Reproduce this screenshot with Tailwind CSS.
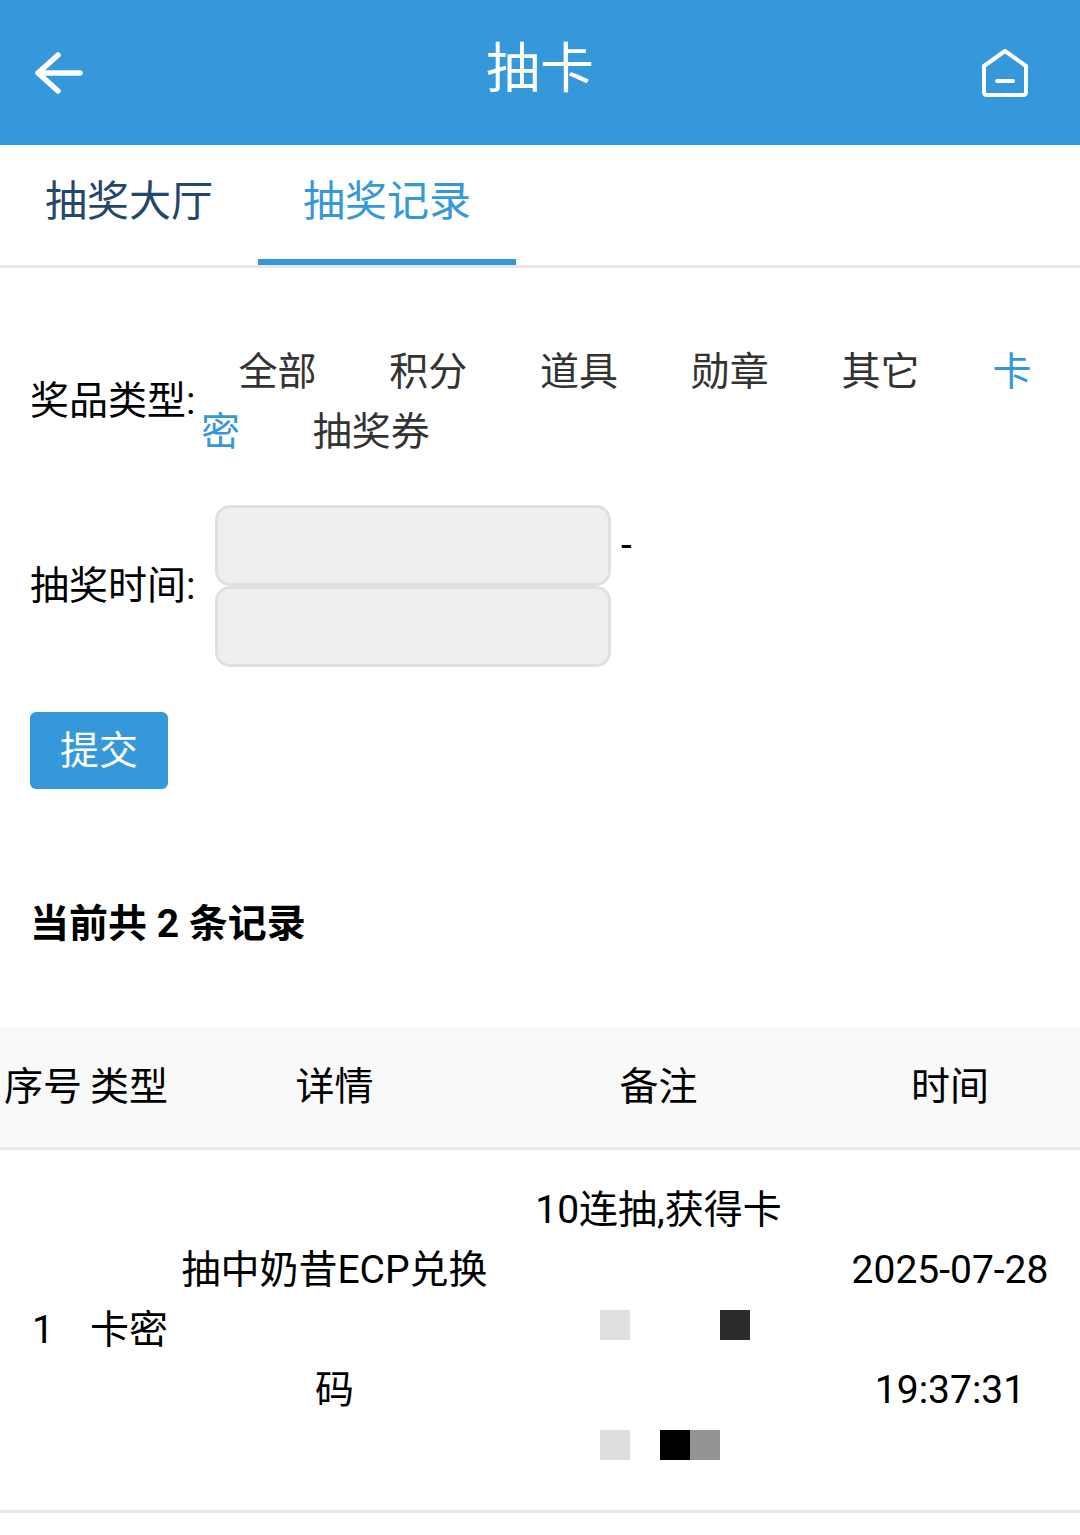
<!DOCTYPE html>
<html lang="zh-CN">
<head>
  <meta charset="UTF-8">
  <meta name="viewport" content="width=device-width, initial-scale=1.0">
  <title>抽卡</title>
  <script src="https://cdn.jsdelivr.net/npm/@tailwindcss/browser@4"></script>
</head>
<body class="bg-white text-black text-[39px] leading-[60px] font-['Roboto','Noto_Sans_CJK_SC',sans-serif]">

  <!-- header -->
  <header class="h-[145px] bg-[#3498db] flex items-center justify-between pb-[8px] text-white">
    <div class="w-[300px] pl-[34px]">
      <svg class="w-[50px] h-[44px] mt-[8px]" viewBox="0 0 50 44" fill="none" stroke="#fff" stroke-width="5.5" stroke-linecap="round" stroke-linejoin="round">
        <path d="M46 22H5M24 4L4 22L24 40"/>
      </svg>
    </div>
    <h1 class="text-[54px] leading-[76px] font-normal mt-[2px]">抽卡</h1>
    <div class="w-[300px] pr-[50px] flex justify-end">
      <svg class="w-[50px] h-[50px] mt-[8px]" viewBox="0 0 50 50" fill="none" stroke="#fff" stroke-width="4" stroke-linejoin="round" stroke-linecap="round">
        <path d="M25 3L46 18V44Q46 47 43 47H7Q4 47 4 44V18Z"/>
        <path d="M17 33H33"/>
      </svg>
    </div>
  </header>

  <!-- tabs -->
  <nav class="flex h-[123px] border-b-[3px] border-[#e8e8e8] text-[42px]">
    <a class="w-[258px] h-[120px] pl-[45px] pt-[27px] text-[#24476b]">抽奖大厅</a>
    <a class="w-[258px] h-[120px] pl-[45px] pt-[27px] text-[#3498db] border-b-[6px] border-[#3498db]">抽奖记录</a>
  </nav>

  <!-- filters -->
  <section class="pl-[30px] pr-[30px] pt-[73px]">
    <div class="flex items-center">
      <span class="w-[171px] shrink-0">奖品类型:</span>
      <div class="text-[#333] translate-y-px">
        <a class="ml-[1px] px-[36.4px]">全部</a><a class="px-[36.4px]">积分</a><a class="px-[36.4px]">道具</a><a class="px-[36.4px]">勋章</a><a class="px-[36.4px]">其它</a><a class="px-[36.4px] text-[#3498db]">卡密</a><a class="px-[36.4px]">抽奖券</a>
      </div>
    </div>

    <div class="flex items-center mt-[44px]">
      <span class="w-[185px] shrink-0">抽奖时间:</span>
      <div>
        <div class="flex items-center">
          <input disabled class="block w-[396px] h-[81px] bg-[#efefef] border-[3px] border-[#e0e0e0] rounded-[15px]">
          <span class="ml-[10px] -mt-[2px]">-</span>
        </div>
        <input disabled class="block w-[396px] h-[81px] bg-[#efefef] border-[3px] border-[#e0e0e0] rounded-[15px]">
      </div>
    </div>

    <button class="block mt-[45px] w-[138px] h-[77px] bg-[#3498db] text-white rounded-[6px]">提交</button>

    <p class="mt-[105px] font-bold">当前共 2 条记录</p>
  </section>

  <!-- records -->
  <table class="mt-[73px] w-[1080px] table-fixed text-center">
    <colgroup>
      <col class="w-[86px]">
      <col class="w-[86px]">
      <col class="w-[325px]">
      <col class="w-[323px]">
      <col class="w-[260px]">
    </colgroup>
    <thead>
      <tr class="h-[121px] bg-[#f9f9f9] border-b-[3px] border-[#e8e8e8]">
        <th class="font-normal">序号</th>
        <th class="font-normal">类型</th>
        <th class="font-normal">详情</th>
        <th class="font-normal">备注</th>
        <th class="font-normal">时间</th>
      </tr>
    </thead>
    <tbody>
      <tr class="h-[363px] border-b-[3px] border-[#e8e8e8]">
        <td>1</td>
        <td>卡密</td>
        <td class="px-[8px] leading-[120px]">抽中奶昔ECP兑换码</td>
        <td class="px-[10px]">
          <div>10连抽,获得卡</div>
          <div class="h-[60px]"></div>
          <div class="h-[60px] flex pl-[93px] pt-[10px]">
            <i class="w-[30px] h-[30px] bg-[#e0e0e0]"></i>
            <i class="w-[30px] h-[30px] ml-[90px] bg-[#2c2c2c]"></i>
          </div>
          <div class="h-[60px]"></div>
          <div class="h-[60px] flex pl-[93px] pt-[10px]">
            <i class="w-[30px] h-[30px] bg-[#dddddd]"></i>
            <i class="w-[30px] h-[30px] ml-[30px] bg-black"></i>
            <i class="w-[30px] h-[30px] bg-[#949494]"></i>
          </div>
        </td>
        <td class="leading-[120px]">2025-07-28 19:37:31</td>
      </tr>
    </tbody>
  </table>

</body>
</html>
